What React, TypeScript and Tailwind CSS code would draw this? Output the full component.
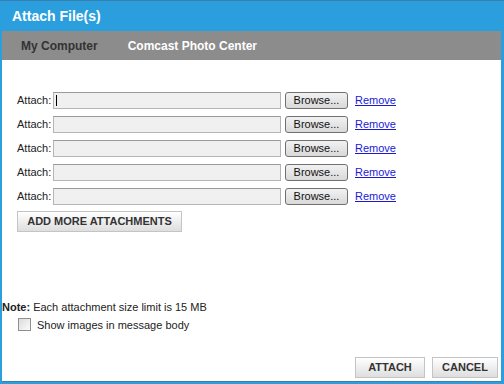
import React from "react";

const font = { fontFamily: '"Liberation Sans", Arial, sans-serif' };

const AttachRow = ({ focused }: { focused?: boolean }) => {
  return (
    <div className="flex h-[24px] items-center">
      <span className="w-[36px] text-[11px] text-[#222]">Attach:</span>
      <div className="relative h-[17px] w-[228px] border border-[#b5b5b5] border-t-[#9a9a9a] bg-[#f0f0f0]">
        {focused && <div className="absolute left-[2px] top-[2px] h-[11px] w-px bg-black" />}
      </div>
      <button className="ml-[4px] h-[17px] w-[63px] rounded-[3px] border border-[#707070] bg-gradient-to-b from-[#f2f2f2] to-[#d9d9d9] text-[11px] leading-none text-[#111]">
        Browse...
      </button>
      <a className="ml-[7px] text-[11px] text-[#1a1ad6] underline">Remove</a>
    </div>
  );
};

const GrayButton = ({ label, width }: { label: string; width: string }) => {
  return (
    <button
      className={`h-[21px] ${width} border border-[#c4c4c4] bg-gradient-to-b from-[#ffffff] to-[#dedede] text-[11px] font-bold text-[#333]`}
    >
      {label}
    </button>
  );
};

export default function App() {
  return (
    <div
      style={font}
      className="flex h-[384px] w-[504px] flex-col border-t border-[#3b7fae] bg-[#2b9fde] pb-[2px] pl-[2px] pr-[3px]"
    >
      <div className="flex h-[30px] items-center pl-[10px] text-[14px] font-bold text-white">
        Attach File(s)
      </div>

      <div className="flex h-[29px] items-center bg-[#8c8c8c] text-[12px] font-bold">
        <span className="ml-[19px] text-[#333]">My Computer</span>
        <span className="ml-[30px] text-white">Comcast Photo Center</span>
      </div>

      <div className="flex flex-1 flex-col bg-white">
        <div className="flex flex-col pl-[15px] pt-[28px]">
          <AttachRow focused />
          <AttachRow />
          <AttachRow />
          <AttachRow />
          <AttachRow />
          <div>
            <GrayButton label="ADD MORE ATTACHMENTS" width="w-[165px]" />
          </div>
        </div>

        <div className="mt-[67px] text-[11px] text-[#222]">
          <span className="font-bold">Note:</span> Each attachment size limit is 15 MB
        </div>
        <div className="mt-[1px] flex items-center pl-[16px]">
          <div className="h-[13px] w-[13px] border border-[#8e8f8f] bg-gradient-to-br from-[#dcdcdc] to-[#fbfbfb]" />
          <span className="ml-[6px] text-[11px] text-[#222]">Show images in message body</span>
        </div>

        <div className="mt-auto flex justify-end gap-[7px] pb-[3px] pr-[3px]">
          <GrayButton label="ATTACH" width="w-[70px]" />
          <GrayButton label="CANCEL" width="w-[66px]" />
        </div>
      </div>
      <div className="h-px bg-[#3b7fae]" />
    </div>
  );
}
